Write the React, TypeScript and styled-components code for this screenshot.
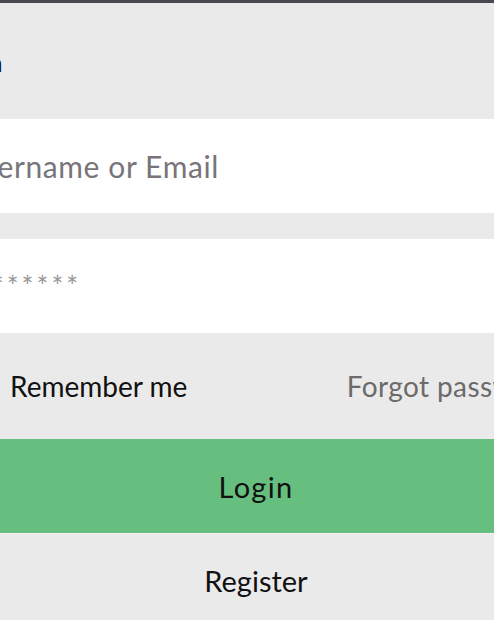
import React from 'react'
import styled, { createGlobalStyle } from 'styled-components'

const GlobalStyle = createGlobalStyle`
  html, body {
    margin: 0;
    padding: 0;
    background: #ebeaea;
    font-family: Lato, "Liberation Sans", sans-serif;
  }
`

const Page = styled.div`
  width: 494px;
  height: 620px;
  overflow: hidden;
  background: #ebeaea;
  border-top: 3px solid #4a4752;
  box-sizing: border-box;
`

const Form = styled.form`
  width: 628px;
  margin-left: -58px;
  display: flex;
  flex-direction: column;
`

const Title = styled.h2`
  margin: 0;
  height: 116px;
  padding-top: 44px;
  box-sizing: border-box;
  font-size: 25px;
  font-weight: 700;
  color: #0b1a3c;
`

const Field = styled.input<{ $stars?: boolean }>`
  height: 94px;
  border: none;
  outline: none;
  background: #ffffff;
  padding: 0 20px;
  font-family: inherit;
  font-size: ${(p) => (p.$stars ? '28px' : '30px')};
  color: #222;
  margin-bottom: ${(p) => (p.$stars ? '0' : '26px')};

  &::placeholder {
    color: ${(p) => (p.$stars ? '#9a9899' : '#77747a')};
    letter-spacing: ${(p) => (p.$stars ? '3px' : '0.6px')};
  }
`

const OptionsRow = styled.div`
  height: 106px;
  display: flex;
  align-items: center;
  justify-content: space-between;
  font-size: 28px;
`

const Remember = styled.label`
  display: flex;
  align-items: center;
  gap: 48px;
  color: #111;
`

const Check = styled.input`
  width: 20px;
  height: 20px;
  margin: 0;
`

const Forgot = styled.a`
  color: #6c6a6a;
  letter-spacing: 0.4px;
  text-decoration: none;
`

const ActionButton = styled.button<{ $primary?: boolean }>`
  height: 94px;
  border: none;
  font-family: inherit;
  font-size: 29px;
  letter-spacing: ${(p) => (p.$primary ? '1.3px' : '0')};
  color: #111;
  background: ${(p) => (p.$primary ? '#66bf7f' : 'transparent')};
  border-top: ${(p) => (p.$primary ? 'none' : '1px solid #f4f4f4')};
`

export default function App() {
  return (
    <>
      <GlobalStyle />
      <Page>
        <Form onSubmit={(e) => e.preventDefault()}>
          <Title>Login</Title>
          <Field type="text" placeholder="Username or Email" />
          <Field type="password" placeholder="********" $stars />
          <OptionsRow>
            <Remember>
              <Check type="checkbox" />
              Remember me
            </Remember>
            <Forgot href="#">Forgot password?</Forgot>
          </OptionsRow>
          <ActionButton type="submit" $primary>
            Login
          </ActionButton>
          <ActionButton type="button">Register</ActionButton>
        </Form>
      </Page>
    </>
  )
}
